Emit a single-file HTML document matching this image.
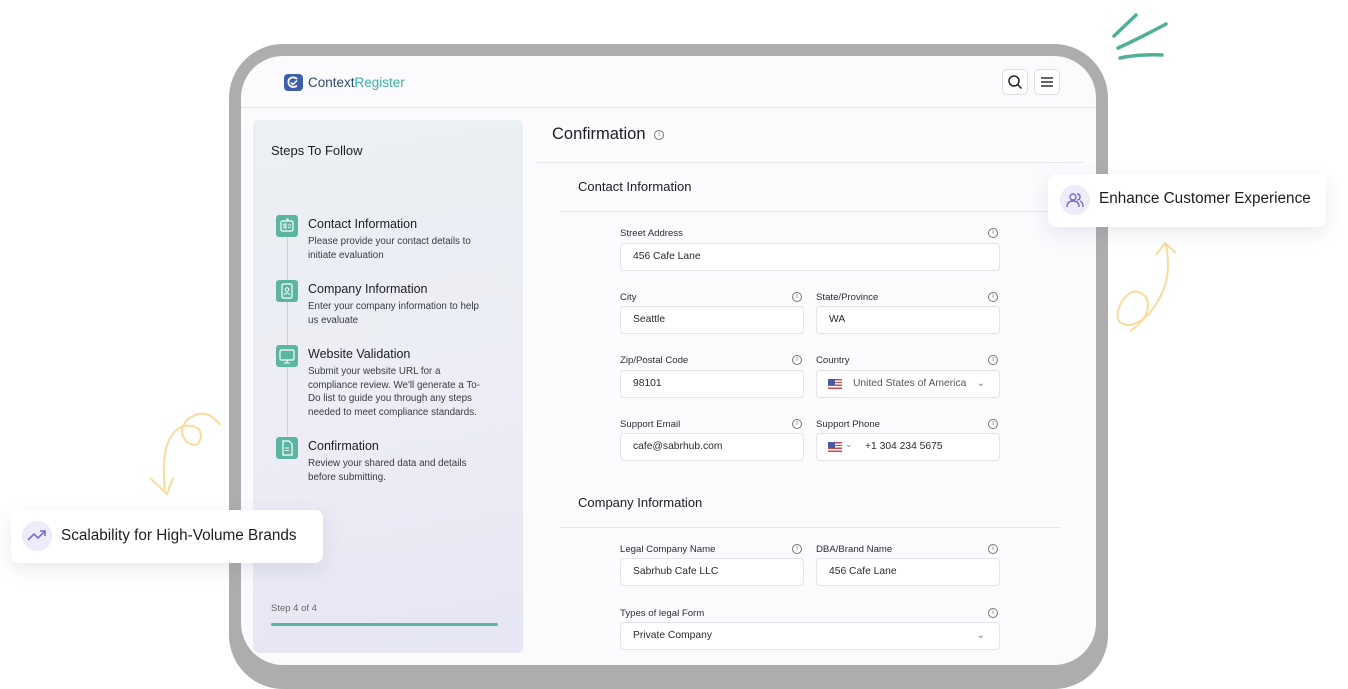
<!DOCTYPE html>
<html><head><meta charset="utf-8"><style>
*{box-sizing:border-box;margin:0;padding:0}
body{width:1348px;height:677px;overflow:hidden;background:#fff;font-family:"Liberation Sans",sans-serif;color:#1d1d22;position:relative}
.abs{position:absolute}
.frame{left:229px;top:44px;width:879px;height:645px;background:#adadad;border-radius:54px}
.screen{left:241px;top:56px;width:855px;height:609px;background:#fbfafd;border-radius:42px;overflow:hidden}
.hline{height:1px;background:#e8e7ec}
.side{left:253px;top:120px;width:270px;height:533px;border-radius:6px;background:linear-gradient(170deg,#eaf0f3 0%,#ecedf5 50%,#e6e6f4 100%)}
.ic{width:22px;height:22px;background:#5bb5a2;border-radius:3px}
.st{font-size:12.5px;color:#1d1d22}
.sd{font-size:9.8px;color:#3a3a44;line-height:13.5px}
.lbl{font-size:9.6px;color:#2c2c34}
.inp{height:28px;border:1px solid #e5e4ea;border-radius:4px;background:#fff;font-size:10.3px;color:#2a2a30;padding-left:12px;line-height:26px}
.info{width:10px;height:10px;border:1px solid #777;border-radius:50%;font-size:7px;line-height:8px;text-align:center;color:#777}
.flag{position:absolute;width:14px;height:10px;background:repeating-linear-gradient(#c94a4a 0 1.4px,#fff 1.4px 2.8px)}
.flag:before{content:"";position:absolute;left:0;top:0;width:7px;height:5.5px;background:#4a5aa0}
.card{background:#fff;border-radius:8px;box-shadow:0 6px 18px rgba(80,80,120,.12)}
</style></head><body>
<div class="abs frame"></div>
<div class="abs screen"></div>
<svg class="abs" style="left:284px;top:74px" width="19" height="17" viewBox="0 0 19 17"><rect width="19" height="17" rx="4" fill="#3d5fa8"/><path d="M13 5 Q11 3 8 3.5 Q4 4.5 4.5 8.5 Q5 13 10 13 L13 12" fill="none" stroke="#fff" stroke-width="1.8"/><path d="M7 8.5l2 2 4-4" fill="none" stroke="#fff" stroke-width="1.5"/></svg>
<div class="abs" style="left:308px;top:75px;font-size:13.5px;color:#2b4a72">Context<span style="color:#3bb0a6">Register</span></div>
<div class="abs" style="left:1002px;top:69px;width:26px;height:26px;border:1px solid #dedde3;border-radius:5px;background:#fff"></div>
<svg class="abs" style="left:1007px;top:74px" width="16" height="16"><circle cx="7" cy="7" r="5" fill="none" stroke="#222" stroke-width="1.5"/><path d="M11 11l3.5 3.5" stroke="#222" stroke-width="1.5"/></svg>
<div class="abs" style="left:1034px;top:69px;width:26px;height:26px;border:1px solid #dedde3;border-radius:5px;background:#fff"></div>
<svg class="abs" style="left:1041px;top:77px" width="12" height="10"><path d="M0 1h12M0 5h12M0 9h12" stroke="#333" stroke-width="1.4"/></svg>
<div class="abs hline" style="left:241px;top:107px;width:855px"></div>
<div class="abs side"></div>
<div class="abs" style="left:271px;top:143px;font-size:13px">Steps To Follow</div>
<div class="abs" style="left:287px;top:237px;width:1px;height:210px;background:#cfd0d8"></div>
<div class="abs ic" style="left:276px;top:215px"></div>
<div class="abs ic" style="left:276px;top:280px"></div>
<div class="abs ic" style="left:276px;top:345px"></div>
<div class="abs ic" style="left:276px;top:437px"></div>
<svg class="abs" style="left:276px;top:215px" width="22" height="22"><rect x="5" y="6" width="12" height="10" rx="1.5" fill="none" stroke="#fff" stroke-width="1.2"/><path d="M8 9h2v4H8zM12 10h3M12 12.5h3M10 4h2v2" stroke="#fff" fill="none"/></svg>
<svg class="abs" style="left:276px;top:280px" width="22" height="22"><rect x="6" y="4" width="10" height="14" rx="1.5" fill="none" stroke="#fff" stroke-width="1.2"/><circle cx="11" cy="9.5" r="1.8" fill="none" stroke="#fff"/><path d="M8 15q3-4 6 0" stroke="#fff" fill="none"/></svg>
<svg class="abs" style="left:276px;top:345px" width="22" height="22"><rect x="4" y="5" width="14" height="10" rx="1.5" fill="none" stroke="#fff" stroke-width="1.2"/><path d="M8 18h6M11 15v3" stroke="#fff"/></svg>
<svg class="abs" style="left:276px;top:437px" width="22" height="22"><path d="M7 4h6l3 3v11H7z" fill="none" stroke="#fff" stroke-width="1.2"/><path d="M9 11h4M9 13.5h4" stroke="#fff"/></svg>
<div class="abs st" style="left:308px;top:217px">Contact Information</div>
<div class="abs sd" style="left:308px;top:235px">Please provide your contact details to<br>initiate evaluation</div>
<div class="abs st" style="left:308px;top:282px">Company Information</div>
<div class="abs sd" style="left:308px;top:300px">Enter your company information to help<br>us evaluate</div>
<div class="abs st" style="left:308px;top:347px">Website Validation</div>
<div class="abs sd" style="left:308px;top:365px">Submit your website URL for a<br>compliance review. We'll generate a To-<br>Do list to guide you through any steps<br>needed to meet compliance standards.</div>
<div class="abs st" style="left:308px;top:439px">Confirmation</div>
<div class="abs sd" style="left:308px;top:457px">Review your shared data and details<br>before submitting.</div>
<div class="abs" style="left:271px;top:603px;font-size:9.5px;color:#666">Step 4 of 4</div>
<div class="abs" style="left:271px;top:623px;width:227px;height:3px;border-radius:2px;background:#5bb5a2"></div>
<div class="abs" style="left:552px;top:125px;font-size:16.5px">Confirmation</div>
<div class="abs info" style="left:654px;top:130px">i</div>
<div class="abs hline" style="left:536px;top:162px;width:548px"></div>
<div class="abs" style="left:578px;top:179px;font-size:13px">Contact Information</div>
<div class="abs hline" style="left:560px;top:211px;width:512px"></div>
<div class="abs lbl" style="left:620px;top:228px">Street Address</div><div class="abs info" style="left:988px;top:228px">i</div>
<div class="abs inp" style="left:620px;top:243px;width:380px">456 Cafe Lane</div>
<div class="abs lbl" style="left:620px;top:292px">City</div><div class="abs info" style="left:792px;top:292px">i</div>
<div class="abs inp" style="left:620px;top:306px;width:184px">Seattle</div>
<div class="abs lbl" style="left:816px;top:292px">State/Province</div><div class="abs info" style="left:988px;top:292px">i</div>
<div class="abs inp" style="left:816px;top:306px;width:184px">WA</div>
<div class="abs lbl" style="left:620px;top:355px">Zip/Postal Code</div><div class="abs info" style="left:792px;top:355px">i</div>
<div class="abs inp" style="left:620px;top:370px;width:184px">98101</div>
<div class="abs lbl" style="left:816px;top:355px">Country</div><div class="abs info" style="left:988px;top:355px">i</div>
<div class="abs inp" style="left:816px;top:370px;width:184px;padding-left:36px;color:#555">United States of America<span style="position:absolute;right:14px;color:#888">⌄</span></div>
<div class="flag" style="left:828px;top:379px"></div>
<div class="abs lbl" style="left:620px;top:419px">Support Email</div><div class="abs info" style="left:792px;top:419px">i</div>
<div class="abs inp" style="left:620px;top:433px;width:184px">cafe@sabrhub.com</div>
<div class="abs lbl" style="left:816px;top:419px">Support Phone</div><div class="abs info" style="left:988px;top:419px">i</div>
<div class="abs inp" style="left:816px;top:433px;width:184px;padding-left:48px">+1 304 234 5675</div>
<div class="flag" style="left:828px;top:442px"></div>
<div class="abs" style="left:845px;top:439px;font-size:9px;color:#888">⌄</div>
<div class="abs" style="left:578px;top:495px;font-size:13px">Company Information</div>
<div class="abs hline" style="left:560px;top:527px;width:500px"></div>
<div class="abs lbl" style="left:620px;top:544px">Legal Company Name</div><div class="abs info" style="left:792px;top:544px">i</div>
<div class="abs inp" style="left:620px;top:558px;width:184px">Sabrhub Cafe LLC</div>
<div class="abs lbl" style="left:816px;top:544px">DBA/Brand Name</div><div class="abs info" style="left:988px;top:544px">i</div>
<div class="abs inp" style="left:816px;top:558px;width:184px">456 Cafe Lane</div>
<div class="abs lbl" style="left:620px;top:608px">Types of legal Form</div><div class="abs info" style="left:988px;top:608px">i</div>
<div class="abs inp" style="left:620px;top:622px;width:380px">Private Company<span style="position:absolute;right:14px;color:#888">⌄</span></div>
<svg class="abs" style="left:1110px;top:10px" width="65" height="55"><path d="M4 26L26 5M8 38Q30 28 56 14M10 48Q30 44 52 45" stroke="#4fb095" stroke-width="3.5" stroke-linecap="round" fill="none"/></svg>
<svg class="abs" style="left:1110px;top:235px" width="80" height="100"><path d="M56 10Q62 40 50 62Q38 86 20 90Q2 90 10 70Q22 48 36 62Q44 80 20 96" stroke="#fbdb9c" stroke-width="2" fill="none"/><path d="M46 20L55 8L66 18" stroke="#fbdb9c" stroke-width="2" fill="none"/></svg>
<svg class="abs" style="left:145px;top:400px" width="80" height="100"><path d="M75 25Q60 5 42 20Q32 32 42 42Q54 50 56 36Q56 24 38 26Q14 36 20 90" stroke="#fbdb9c" stroke-width="2" fill="none"/><path d="M5 78L22 94L28 78" stroke="#fbdb9c" stroke-width="2" fill="none"/></svg>
<div class="abs card" style="left:1048px;top:174px;width:278px;height:53px"></div>
<div class="abs" style="left:1060px;top:185px;width:30px;height:30px;border-radius:50%;background:#eeebfb"></div>
<svg class="abs" style="left:1066px;top:191px" width="18" height="18"><circle cx="7" cy="6" r="3" fill="none" stroke="#7a6cc8" stroke-width="1.4"/><path d="M1 16q0-6 6-6t6 6M11 3q3 0 3 3t-3 3M14 10q3 1 3 6" fill="none" stroke="#7a6cc8" stroke-width="1.4"/></svg>
<div class="abs" style="left:1099px;top:190px;font-size:15.3px">Enhance Customer Experience</div>
<div class="abs card" style="left:11px;top:510px;width:312px;height:53px"></div>
<div class="abs" style="left:22px;top:521px;width:30px;height:30px;border-radius:50%;background:#eeebfb"></div>
<svg class="abs" style="left:27px;top:528px" width="20" height="14"><path d="M1 12l6-6 4 4 7-7M13 3h5v5" fill="none" stroke="#7a6cc8" stroke-width="1.6"/></svg>
<div class="abs" style="left:61px;top:527px;font-size:15.3px">Scalability for High-Volume Brands</div>
</body></html>
